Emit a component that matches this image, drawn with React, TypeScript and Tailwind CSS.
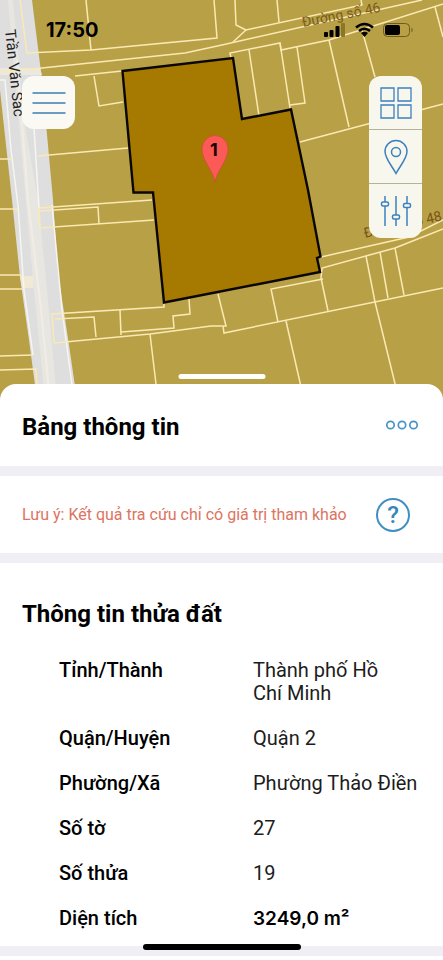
import React from "react";

const boundaries = [
  "M86 0L91 50",
  "M214 0L217 38L91 50L27 53L20 0",
  "M0 72L42 68L185 53L222 45L422 0",
  "M235 0L236 25L246 30L233 42",
  "M246 30L362 5L361 0",
  "M277 0L279 22",
  "M75 76L122 71",
  "M231 58L230 53L280 43L281 50L329 40L443 4",
  "M435 7L443 37",
  "M249 50L259 116",
  "M280 43L290 108",
  "M297 47L305 103L290 105",
  "M329 40L349 127",
  "M362 30L375 77",
  "M300 142L443 104",
  "M94 76L99 106L123 102",
  "M38 156L128 148",
  "M0 159L12 159",
  "M0 209L18 209",
  "M39 208L152 200",
  "M40 211L98 207L99 224",
  "M39 208L40 228L154 220",
  "M0 275L22 275",
  "M0 289L23 289",
  "M0 356L33 355",
  "M0 370L36 369L38 400",
  "M54 343L52 314L164 307L164 303",
  "M55 319L94 317L96 337",
  "M54 343L150 334L211 326L222 326",
  "M120 310L121 335",
  "M121 332L174 328L173 316L190 314L189 299",
  "M150 334L156 384L158 400",
  "M218 294L226 326L223 326L224 333L443 288",
  "M321 257L409 237L443 220",
  "M321 278L322 268L395 248L443 229",
  "M323 279L271 289L278 322",
  "M321 278L328 311",
  "M366 256L375 302L399 400",
  "M380 252L388 298",
  "M395 248L404 295",
  "M286 321L304 400",
];

function ParcelMap() {
  return (
    <svg
      className="absolute inset-0 h-full w-full"
      viewBox="0 0 443 400"
      preserveAspectRatio="xMidYMid slice"
      role="img"
      aria-label="Bản đồ thửa đất"
    >
      <rect width="443" height="400" fill="#b8a046" />
      <path d="M0 0H32L42 80L53 200L58 273L69 345L77 400H37L29 340L20 277L12 200L0 90Z" fill="#dedede" />
      <path d="M13 0L24 120L38 200L48 300L57 400H45L33 280L24 180L8 0Z" fill="#e8e6e1" />
      <path d="M17 60L28 200L40 300L50 400" fill="none" stroke="#f1ede4" strokeWidth="2" />
      <path d="M0 68H40L42 75H0Z" fill="#ebe8e0" />
      <path d="M20 276H33V288H22Z" fill="#f1e8d6" />
      <g fill="none" stroke="#f7f5f1" strokeWidth="1.5">
        <path d="M0 80H5L11 150L18 205L24 290L33 355" />
        <path d="M34 128L39 208" />
        <path d="M52 205L62 310L74 400" />
      </g>
      <g fill="none" stroke="#fbe9b4" strokeWidth="1.5">
        {boundaries.map((d) => (
          <path key={d} d={d} />
        ))}
      </g>
      <g fontFamily='Roboto, "Noto Sans", sans-serif'>
        <text transform="translate(5 30) rotate(84)" fontSize="15" fill="#222">Trần Văn Sắc</text>
        <text transform="translate(303 27) rotate(-11)" fontSize="14" fill="#7a5c1c">Đường số 46</text>
        <text transform="translate(365 238) rotate(-13)" fontSize="14" fill="#7a5416">Đường số 48</text>
      </g>
      <path
        d="M122.500 71L233 58L242 119L291 109.500L308 190L320.500 256.500L317 258L320 272L164 302.500L153 192.500L133.500 192.500Z"
        fill="#a67900"
        stroke="#0a0703"
        strokeWidth="2.400"
      />
      <path
        d="M215 182C213 170 202 161 202 149A13 13.500 0 0 1 228 149C228 161 217 170 215 182Z"
        fill="#fb5a57"
        stroke="#c9483a"
        strokeWidth="0.600"
      />
      <text x="214" y="156" textAnchor="middle" fontFamily="Inter, sans-serif" fontSize="18" fontWeight="700" fill="#1c0503">
        1
      </text>
    </svg>
  );
}

function StatusBar() {
  return (
    <div className="relative flex h-[60px] items-center justify-between pr-[29px] pl-[46px] text-black">
      <time className="text-[20px] leading-6 font-bold">17:50</time>
      <svg width="90" height="18" viewBox="0 0 90 18" aria-hidden="true">
        <rect x="0" y="11" width="4" height="5" rx="1" />
        <rect x="5.500" y="9" width="4" height="7" rx="1" />
        <rect x="11.500" y="5" width="4" height="11" rx="1" />
        <rect x="17" y="2" width="4" height="14" rx="1" fill="#8c7428" />
        <g fill="none" stroke="#000" strokeWidth="2.600">
          <path d="M32 6.500Q40.500 -0.500 49 6.500" />
          <path d="M35 10Q40.500 5.500 46 10" />
        </g>
        <path d="M37 12Q40.500 9.500 44 12L40.500 16Z" />
        <rect x="59.500" y="2.500" width="26" height="13" rx="4" fill="none" stroke="#6d5b1f" />
        <rect x="61" y="4" width="15" height="10" rx="2" />
        <path d="M87.500 6.500Q90 9 87.500 11.500Z" fill="#6d5b1f" />
      </svg>
    </div>
  );
}

const toolClass = "flex h-[54px] w-full items-center justify-center";

function MapTools() {
  return (
    <div className="relative mt-4 flex items-start justify-between pr-[21px] pl-[22px]">
      <button type="button" aria-label="Menu" className="flex h-[53px] w-[53px] items-center justify-center rounded-xl bg-[#faf9f3]">
        <svg width="34" height="24" viewBox="0 0 34 24" fill="none" stroke="#3d7fb4" strokeWidth="1.500" aria-hidden="true">
          <path d="M0.500 2H33.500M0.500 12H33.500M0.500 22H33.500" />
        </svg>
      </button>
      <div className="w-[53px] divide-y divide-[#b5b19c] overflow-hidden rounded-xl bg-[#f8f7ee]">
        <button type="button" aria-label="Lớp bản đồ" className={toolClass}>
          <svg width="32" height="32" viewBox="0 0 32 32" fill="none" stroke="#3b80c0" strokeWidth="1.300" aria-hidden="true">
            <path d="M1 1H14V14H1ZM18 1H31V14H18ZM1 18H14V31H1ZM18 18H31V31H18Z" />
          </svg>
        </button>
        <button type="button" aria-label="Vị trí" className={toolClass}>
          <svg width="24" height="36" viewBox="0 0 24 36" fill="none" stroke="#3b80c0" strokeWidth="1.500" aria-hidden="true">
            <path d="M12 34.500C8 27 1 19.500 1 12.500A11 11 0 0 1 23 12.500C23 19.500 16 27 12 34.500Z" />
            <circle cx="12" cy="13" r="4.500" />
          </svg>
        </button>
        <button type="button" aria-label="Bộ lọc" className={toolClass}>
          <svg width="32" height="30" viewBox="0 0 32 30" fill="none" stroke="#3b80c0" strokeWidth="1.500" aria-hidden="true">
            <path d="M5 0V6M5 10V30M16 0V19M16 23V30M27 0V7.500M27 11.500V30" />
            <rect x="1.500" y="6" width="7" height="4" rx="1.500" />
            <rect x="12.500" y="19" width="7" height="4" rx="1.500" />
            <rect x="23.500" y="7.500" width="7" height="4" rx="1.500" />
          </svg>
        </button>
      </div>
    </div>
  );
}

const rows = [
  { label: "Tỉnh/Thành", value: "Thành phố Hồ Chí\u00a0Minh" },
  { label: "Quận/Huyện", value: "Quận 2" },
  { label: "Phường/Xã", value: "Phường Thảo Điền" },
  { label: "Số tờ", value: "27" },
  { label: "Số thửa", value: "19" },
];

const labelClass = "box-content w-[194px] pl-[59px] text-left align-top font-medium";

export default function App() {
  return (
    <div className="relative bg-white pb-[3px] font-[Roboto,'Noto_Sans',sans-serif] text-black">
      <header className="relative h-[400px] overflow-hidden font-[Inter,sans-serif]">
        <ParcelMap />
        <StatusBar />
        <MapTools />
        <div className="absolute bottom-[21px] left-1/2 h-[5px] w-[87px] -translate-x-1/2 rounded-full bg-white" />
      </header>

      <main className="relative -mt-4 rounded-t-2xl bg-white">
        <section className="flex h-[82px] items-center justify-between pr-6 pl-[22px]">
          <h1 className="pt-1 text-[24px] leading-8 font-bold">Bảng thông tin</h1>
          <button type="button" aria-label="Thêm">
            <svg width="34" height="12" viewBox="0 0 34 12" fill="none" stroke="#4a93c4" strokeWidth="1.700" aria-hidden="true">
              <circle cx="5.500" cy="6" r="3.700" />
              <circle cx="17" cy="6" r="3.700" />
              <circle cx="28.500" cy="6" r="3.700" />
            </svg>
          </button>
        </section>

        <section className="flex h-[97px] items-center justify-between border-y-[10px] border-[#f0eff5] pr-[33px] pl-[22px]">
          <p className="text-[16px] leading-6 text-[#dc7461]">Lưu ý: Kết quả tra cứu chỉ có giá trị tham khảo</p>
          <button
            type="button"
            aria-label="Trợ giúp"
            className="flex h-[34px] w-[34px] shrink-0 items-center justify-center rounded-full border-2 border-[#3f8fc2] text-[24px] leading-6 font-medium text-[#3586bd]"
          >
            ?
          </button>
        </section>

        <section className="border-b-[10px] border-[#f0eff5] pt-[35px] pb-4">
          <h2 className="pl-[22px] text-[24px] leading-8 font-bold">Thông tin thửa đất</h2>
          <table className="mt-[29px] w-full table-fixed text-[20px] leading-[23px]">
            <tbody>
              {rows.map((row) => (
                <tr key={row.label}>
                  <th scope="row" className={labelClass}>
                    {row.label}
                  </th>
                  <td className="pr-6 pb-[22px] align-top text-[#1c1c1c]">{row.value}</td>
                </tr>
              ))}
              <tr>
                <th scope="row" className={labelClass}>
                  Diện tích
                </th>
                <td className="pr-6 align-top font-[Inter,sans-serif] text-[19px] font-semibold">3249,0 m²</td>
              </tr>
            </tbody>
          </table>
        </section>
      </main>

      <div className="absolute bottom-[9px] left-1/2 h-[6px] w-[158px] -translate-x-1/2 rounded-full bg-black" />
    </div>
  );
}
